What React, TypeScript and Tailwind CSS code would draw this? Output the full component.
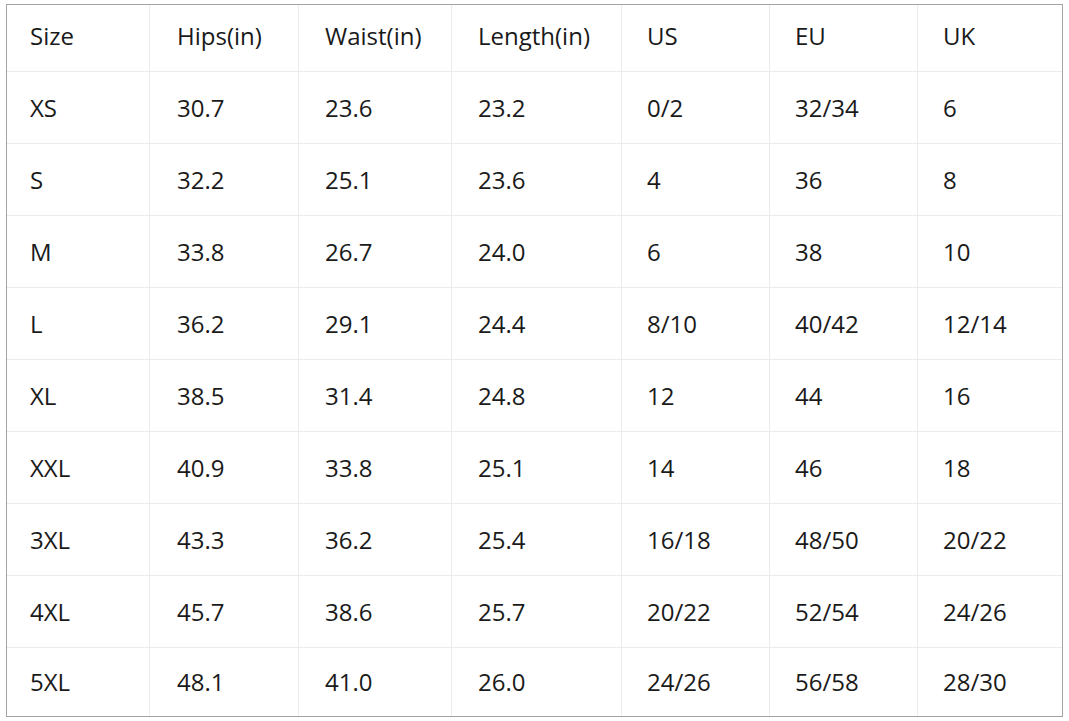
const headers = ['Size', 'Hips(in)', 'Waist(in)', 'Length(in)', 'US', 'EU', 'UK'];

const rows = [
  ['XS', '30.7', '23.6', '23.2', '0/2', '32/34', '6'],
  ['S', '32.2', '25.1', '23.6', '4', '36', '8'],
  ['M', '33.8', '26.7', '24.0', '6', '38', '10'],
  ['L', '36.2', '29.1', '24.4', '8/10', '40/42', '12/14'],
  ['XL', '38.5', '31.4', '24.8', '12', '44', '16'],
  ['XXL', '40.9', '33.8', '25.1', '14', '46', '18'],
  ['3XL', '43.3', '36.2', '25.4', '16/18', '48/50', '20/22'],
  ['4XL', '45.7', '38.6', '25.7', '20/22', '52/54', '24/26'],
  ['5XL', '48.1', '41.0', '26.0', '24/26', '56/58', '28/30'],
];

// left padding per column, tuned to the reference
const pad = ['pl-[23px]', 'pl-[27px]', 'pl-[26px]', 'pl-[26px]', 'pl-[25px]', 'pl-[25px]', 'pl-[25px]'];

function Row({ cells, height, last }: { cells: string[]; height: string; last?: boolean }) {
  return (
    <>
      {cells.map((c, i) => (
        <div
          key={i}
          className={`flex items-center ${pad[i]} ${height} ${last ? '' : 'border-b'} ${
            i < cells.length - 1 ? 'border-r' : ''
          } border-[#ebebeb]`}
        >
          {c}
        </div>
      ))}
    </>
  );
}

export default function App() {
  return (
    <div className="h-[721px] w-[1069px] bg-white pl-[6px] pt-[4px]">
      <div
        className="grid w-[1057px] grid-cols-[143px_149px_153px_170px_148px_148px_144px] border border-[#a3a3a3] text-[24px] leading-none text-[#1a1a1a]"
        style={{ fontFamily: '"Open Sans", "Noto Sans", sans-serif' }}
      >
        <Row cells={headers} height="h-[67px] pb-[5px]" />
        {rows.map((r, i) => (
          <Row
            key={r[0]}
            cells={r}
            height={i === rows.length - 1 ? 'h-[68px]' : 'h-[72px]'}
            last={i === rows.length - 1}
          />
        ))}
      </div>
    </div>
  );
}
